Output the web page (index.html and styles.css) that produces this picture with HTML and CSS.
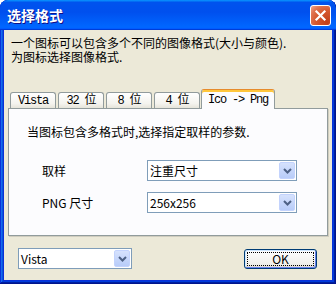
FILE: index.html
```html
<!DOCTYPE html>
<html>
<head>
<meta charset="utf-8">
<link rel="stylesheet" href="styles.css">
</head>
<body>
<div class="window">
  <div class="titlebar">
    <span class="title">选择格式</span>
    <span class="close"><svg width="19" height="19" viewBox="0 0 19 19"><path d="M5.5 5.5 L13.5 13.5 M13.5 5.5 L5.5 13.5" stroke="#fff" stroke-width="2.2" stroke-linecap="square" fill="none"/></svg></span>
  </div>
  <div class="frame">
    <div class="client">
      <p class="desc">一个图标可以包含多个不同的图像格式(大小与颜色).<br>为图标选择图像格式.</p>
      <div class="tabs">
        <div class="tab">Vista</div>
        <div class="tab">32 位</div>
        <div class="tab">8 位</div>
        <div class="tab">4 位</div>
        <div class="tab active">Ico -&gt; Png</div>
      </div>
      <div class="panel">
        <p class="hint">当图标包含多格式时,选择指定取样的参数.</p>
        <div class="rows">
          <span class="label">取样</span>
          <div class="combo wide"><span class="val">注重尺寸</span><span class="drop"><svg width="9" height="6" viewBox="0 0 9 6"><polyline points="1,1 4.5,4.5 8,1" stroke="#4D6185" stroke-width="2" fill="none"/></svg></span></div>
          <span class="label">PNG 尺寸</span>
          <div class="combo wide"><span class="val">256x256</span><span class="drop"><svg width="9" height="6" viewBox="0 0 9 6"><polyline points="1,1 4.5,4.5 8,1" stroke="#4D6185" stroke-width="2" fill="none"/></svg></span></div>
        </div>
      </div>
      <div class="footer">
        <div class="combo small"><span class="val">Vista</span><span class="drop"><svg width="9" height="6" viewBox="0 0 9 6"><polyline points="1,1 4.5,4.5 8,1" stroke="#4D6185" stroke-width="2" fill="none"/></svg></span></div>
        <div class="btn"><span class="focus">OK</span></div>
      </div>
    </div>
  </div>
</div>
</body>
</html>
```
FILE: styles.css
```css
* { box-sizing: border-box; }
body {
  margin: 0;
  background: #fff;
  font-family: "Noto Sans CJK SC", "Liberation Sans", sans-serif;
  font-size: 12px;
  color: #000;
}
.window {
  width: 336px;
  height: 284px;
  display: flex;
  flex-direction: column;
  background: #0831d9;
  border-radius: 8px 8px 0 0;
  overflow: hidden;
  box-shadow: inset -1px -1px #00138c, inset 1px 1px #0831d9, inset -2px -2px #001ea0, inset 2px 2px #166aee, inset -3px -3px #003bda, inset 3px 3px #0855dd;
}
.titlebar {
  height: 30px;
  flex: none;
  display: flex;
  align-items: center;
  justify-content: space-between;
  padding: 0 5px 0 7px;
  background: linear-gradient(180deg, #0997ff, #0053ee 8%, #0050ee 40%, #06f 88%, #06f 93%, #005bff 95%, #003dd7 96%, #003dd7);
  border-radius: 8px 8px 0 0;
}
.title {
  color: #fff;
  font-weight: bold;
  font-size: 14px;
  line-height: 16px;
  text-shadow: 1px 1px #0f1089;
}
.close {
  width: 21px;
  height: 21px;
  border: 1px solid #fff;
  border-radius: 3px;
  background: radial-gradient(circle at 85% 85%, #c1401a 0, #d5582e 50%, #df7350 75%, #f2a88e 100%);
  display: flex;
  align-items: center;
  justify-content: center;
}
.frame {
  flex: 1;
  display: flex;
  padding: 0 4px 4px;
}
.client {
  flex: 1;
  background: #ECE9D8;
  display: flex;
  flex-direction: column;
}
.desc {
  margin: 0;
  padding: 6px 0 0 7px;
  line-height: 14px;
}
.tabs {
  display: flex;
  align-items: flex-end;
  height: 19px;
  margin-top: 25px;
  padding-left: 6px;
  position: relative;
  z-index: 1;
}
.tab {
  width: 46px;
  height: 16px;
  margin-right: 2px;
  border: 1px solid #919B9C;
  border-bottom: none;
  border-radius: 3px 3px 0 0;
  background: linear-gradient(#ffffff, #F4F3EE 70%, #E6E4DA);
  font-family: "Liberation Mono", "Noto Sans CJK SC", monospace;
  font-size: 12px;
  letter-spacing: -1.2px;
  display: flex;
  align-items: center;
  justify-content: center;
  white-space: pre;
  line-height: 14px;
}
.tab.active {
  width: 74px;
  height: 20px;
  margin: 0 0 -1px -1px;
  background: #FCFCFE;
  border-top: 1px solid #E68B2C;
  box-shadow: inset 0 2px #FFC73C;
  padding-top: 1px;
}
.panel {
  margin: 0 4px;
  height: 128px;
  border: 1px solid #919B9C;
  background: #FCFCFE;
  box-shadow: 1px 1px 0 #D0CDBF;
  padding: 16px 0 0 18px;
}
.hint {
  margin: 0;
  line-height: 14px;
}
.rows {
  display: grid;
  grid-template-columns: 105px 150px;
  row-gap: 11px;
  align-items: center;
  margin: 21px 0 0 15px;
}
.combo {
  height: 21px;
  border: 1px solid #7F9DB9;
  background: #fff;
  display: flex;
  align-items: center;
  padding: 1px 1px 1px 2px;
}
.combo.small { width: 114px; }
.val {
  flex: 1;
  line-height: 17px;
}
.drop {
  width: 16px;
  height: 17px;
  border: 1px solid #C3D3FD;
  border-radius: 2px;
  background: linear-gradient(#D6E2FD, #B8CCF9);
  display: flex;
  align-items: center;
  justify-content: center;
}
.footer {
  display: flex;
  justify-content: space-between;
  align-items: flex-start;
  margin-top: 12px;
  padding: 0 15px 0 14px;
}
.btn {
  width: 73px;
  height: 20px;
  margin-top: 1px;
  border: 1px solid #003C74;
  border-radius: 3px;
  background: linear-gradient(#ffffff, #F0EFEA 80%, #D8D2C6);
  box-shadow: inset 1px 1px #CEE7FF, inset -1px -1px #6982EE;
  display: flex;
  padding: 2px;
}
.focus {
  flex: 1;
  border: 1px dotted #000;
  display: flex;
  align-items: center;
  justify-content: center;
  line-height: 12px;
}
```
